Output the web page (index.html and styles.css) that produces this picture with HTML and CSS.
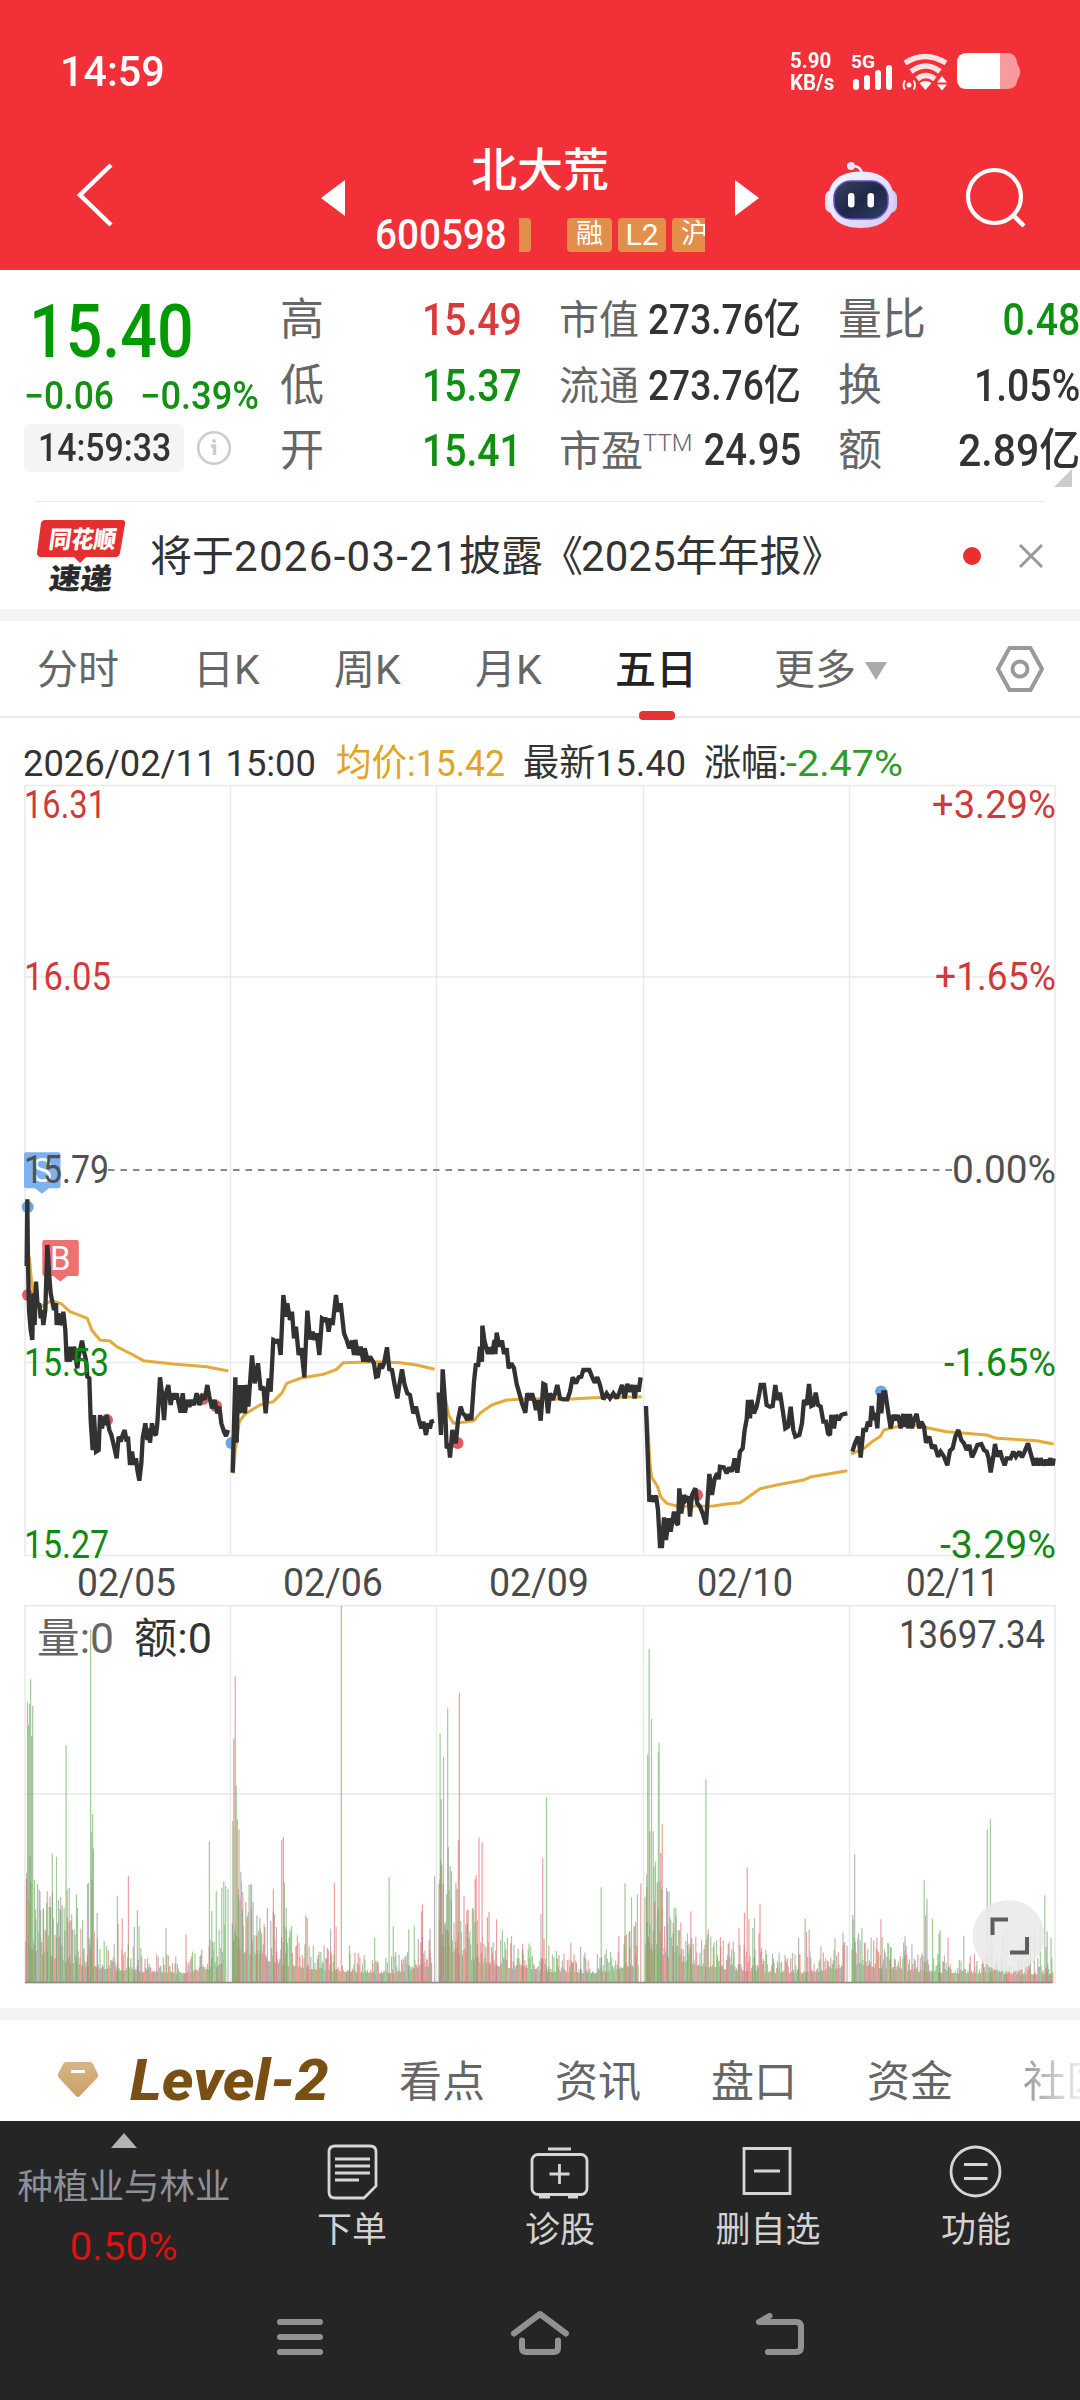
FILE: index.html
```html
<!DOCTYPE html>
<html lang="zh-CN">
<head>
<meta charset="utf-8">
<title>北大荒 600598</title>
<link rel="stylesheet" href="styles.css">
</head>
<body>
<header class="header">
  <div class="status">
    <span class="clock"><b class="fit">14:59</b></span>
    <span class="speed"><span>5.90</span><span>KB/s</span></span>
    <svg class="sys" width="172" height="42" viewBox="850 50 172 42">
      <text x="851" y="68" class="net" textLength="24" lengthAdjust="spacingAndGlyphs">5G</text>
      <path d="M856 82v5M867 78v9M878 73v14M889 68v19" stroke="#fff" stroke-width="6" stroke-linecap="round"/>
      <g fill="none" stroke="#ffe3e3" stroke-width="5.500"><path d="M905 63q20-13 41 0M911 71.500q15-11 29 0M917 79q9-7 18 0"/></g>
      <path d="M925.500 90l-6-7q6-4 12 0zM942 76l5 6.500h-10zM942 90.500l5-6h-10z" fill="#fff"/>
      <circle cx="909" cy="85" r="2.500" fill="#fff"/>
      <path d="M905 80.500q-3 5 0 9M913.500 80.500q3 5 0 9" fill="none" stroke="#fff" stroke-width="1.800"/>
      <path d="M967 53h40q9 0 10 9l.5 3q2.500 2 2.500 7t-2.500 7l-.5 3q-1 7-10 7h-40q-10 0-10-10V63q0-10 10-10z" fill="#f99a9c"/>
      <path d="M967 53h33v36h-33q-10 0-10-10V63q0-10 10-10z" fill="#fff"/>
    </svg>
  </div>
  <nav class="nav">
    <svg class="back" width="38" height="66" viewBox="0 0 38 66"><path d="M36 3L5 33l31 30" fill="none" stroke="#fff" stroke-width="4.500"/></svg>
    <svg class="prev" width="24" height="36" viewBox="0 0 24 36"><path d="M0 18L24 0v36z" fill="#fff"/></svg>
    <div class="stock">
      <h1 class="stock-name">北大荒</h1>
      <div class="stock-meta">
        <span class="code"><span class="fit">600598</span></span>
        <span class="sliver"></span>
        <span class="tag">融</span><span class="tag tag-l2">L2</span><span class="tag tag-cut">沪</span>
      </div>
    </div>
    <svg class="next" width="24" height="36" viewBox="0 0 24 36"><path d="M24 18L0 0v36z" fill="#fff"/></svg>
    <svg class="robot" width="72" height="68" viewBox="825 161 72 68">
      <defs><linearGradient id="shell" x1="0" y1="0" x2="1" y2="1"><stop offset="0" stop-color="#f4fbff"/><stop offset="1" stop-color="#d6c8f8"/></linearGradient>
      <linearGradient id="face" x1="0" y1="0" x2="1" y2="1"><stop offset="0" stop-color="#39445f"/><stop offset=".5" stop-color="#1e2748"/><stop offset="1" stop-color="#303e66"/></linearGradient></defs>
      <path d="M862 174q-1-8-9-8" fill="none" stroke="#f5e9f8" stroke-width="2.500"/><circle cx="851" cy="166" r="4" fill="#ece0f6"/>
      <rect x="825" y="190" width="14" height="23" rx="7" fill="#dfdcf7"/><rect x="883" y="190" width="14" height="23" rx="7" fill="#d4c8f5"/>
      <path d="M861 171.500c24 0 33 13 33 29s-11 27.500-33 27.500-33-11-33-27.500 9-29 33-29z" fill="url(#shell)"/>
      <rect x="834" y="181" width="54" height="38" rx="17" fill="url(#face)" stroke="#6b50c8" stroke-width="1.500"/>
      <rect x="848" y="193" width="6.500" height="14.500" rx="3.200" fill="#fff"/><rect x="867.500" y="193" width="6.500" height="14.500" rx="3.200" fill="#fff"/>
    </svg>
    <svg class="search" width="62" height="62" viewBox="964 166 62 62"><circle cx="994.500" cy="196.500" r="26.500" fill="none" stroke="#fff" stroke-width="4.200"/><path d="M1012 214l12 12" stroke="#fff" stroke-width="4.500"/></svg>
  </nav>
</header>

<section class="quote">
  <div class="last">
    <div class="last-price"><span class="fit">15.40</span></div>
    <div class="change"><span class="fit chg-abs">−0.06</span><span class="fit chg-pct">−0.39%</span></div>
    <div class="time-row">
      <span class="time"><span class="fit">14:59:33</span></span>
      <svg width="36" height="36" viewBox="0 0 36 36"><circle cx="18" cy="18" r="15.800" fill="none" stroke="#ccc" stroke-width="2.600"/><path d="M15 16h3.500v9" fill="none" stroke="#ccc" stroke-width="3.500"/><circle cx="18" cy="11" r="2" fill="#ccc"/></svg>
    </div>
  </div>
  <dl class="stats s1">
    <div><dt>高</dt><dd class="up"><span class="fit">15.49</span></dd></div>
    <div><dt>低</dt><dd class="down"><span class="fit">15.37</span></dd></div>
    <div><dt>开</dt><dd class="down"><span class="fit">15.41</span></dd></div>
  </dl>
  <dl class="stats s2">
    <div><dt>市值</dt><dd><span class="fit">273.76亿</span></dd></div>
    <div><dt>流通</dt><dd><span class="fit">273.76亿</span></dd></div>
    <div class="pe"><dt>市盈<small>TTM</small></dt><dd><span class="fit">24.95</span></dd></div>
  </dl>
  <dl class="stats s3">
    <div><dt>量比</dt><dd class="down"><span class="fit">0.48</span></dd></div>
    <div><dt>换</dt><dd><span class="fit">1.05%</span></dd></div>
    <div><dt>额</dt><dd><span class="fit amount">2.89亿</span></dd></div>
  </dl>
  <i class="corner"></i>
</section>

<section class="news">
  <svg class="news-badge" width="92" height="76" viewBox="35 517 92 76">
    <path d="M45 519h77q4 0 3 4l-5 29q-1 4-4 4H86l-6 6-6-6H41q-4 0-4-4l4-30q1-3 4-3z" fill="#e52e30"/>
    <g class="badge-text"><text transform="translate(48 547) skewX(-8)" fill="#fff" font-size="24" textLength="67" lengthAdjust="spacingAndGlyphs">同花顺</text>
    <text transform="translate(48 587.500) skewX(-8)" fill="#2b2b2b" font-size="29" textLength="63" lengthAdjust="spacingAndGlyphs">速递</text></g>
  </svg>
  <p class="news-text"><span>将于</span><span class="num">2026-03-21</span><span>披露</span><span class="bracket">《</span><span>2025</span><span>年年报》</span></p>
  <i class="dot"></i>
  <svg class="close" width="26" height="26" viewBox="0 0 26 26"><path d="M2 2l22 22M24 2L2 24" stroke="#999" stroke-width="3"/></svg>
</section>

<nav class="tabs">
  <span>分时</span><span>日K</span><span>周K</span><span>月K</span><span class="active">五日</span>
  <span class="more">更多<i></i></span>
  <svg width="50" height="48" viewBox="0 0 50 48"><path d="M14.500 3h21L47 24 35.500 45h-21L3 24z" fill="none" stroke="#999" stroke-width="4" stroke-linejoin="round"/><circle cx="25" cy="24" r="7.500" fill="none" stroke="#999" stroke-width="4"/></svg>
</nav>

<section class="charts">
<svg class="price" width="1080" height="887" viewBox="0 718 1080 887">
  <g fill="#333" class="cjk">
    <text x="23" y="776" textLength="293" lengthAdjust="spacingAndGlyphs">2026/02/11 15:00</text>
    <text x="336" y="776" textLength="169" lengthAdjust="spacingAndGlyphs" fill="#e3a324">均价:15.42</text>
    <text x="523" y="776" textLength="163" lengthAdjust="spacingAndGlyphs">最新15.40</text>
    <text x="704" y="776" textLength="83" lengthAdjust="spacingAndGlyphs">涨幅:</text>
    <text x="786" y="776" textLength="117" lengthAdjust="spacingAndGlyphs" fill="#309a2c">-2.47%</text>
  </g>
  <g fill="none" stroke="#e9e9e9" stroke-width="1.500">
    <path d="M25 785.500H1055V1555.500H25z M25 977H1055M25 1362.500H1055"/>
    <path d="M230.500 785V1555M436.500 785V1555M643.500 785V1555M849.500 785V1555"/>
  </g>
  <path d="M108 1170H952" stroke="#888" stroke-width="1.800" stroke-dasharray="6.500 6"/>

  <g transform="translate(24 1152.300)"><path d="M2 0h32.500q2 0 2 2v32q0 2-2 2H25l-7 5.500-7-5.500H2q-2 0-2-2V2q0-2 2-2z" fill="#7fb0f0"/><text x="18" y="30" class="mark">S</text></g>
  <g transform="translate(42.300 1240)"><path d="M2 0h32.500q2 0 2 2v32q0 2-2 2H25l-7 5.500-7-5.500H2q-2 0-2-2V2q0-2 2-2z" fill="#f07072"/><text x="18" y="30" class="mark">B</text></g>

  <g fill="#e05a5f"><circle cx="28" cy="1295" r="6"/><circle cx="107" cy="1420" r="6"/><circle cx="203" cy="1399" r="6"/><circle cx="216" cy="1406" r="6"/><circle cx="457.500" cy="1443" r="6"/><circle cx="697" cy="1495" r="6"/></g>
  <g fill="#6ca3e6"><circle cx="27.700" cy="1207" r="6"/><circle cx="231.500" cy="1443" r="6"/><circle cx="881" cy="1391.500" r="6"/></g>

  <g class="avg">
    <g transform="translate(0 1130) scale(.33333)">
      <polyline points="88,380 95,460 105,510 125,530 140,520 155,512 185,522 210,545 262,565 275,600 300,630 330,633 350,650 400,675 430,692 520,702 620,710 685,723"/>
      <polyline points="700,1030 706,960 718,875 735,852 780,825 820,815 845,790 860,760 900,745 970,733 1010,718 1030,698 1130,695 1200,698 1250,705 1304,718"/>
    </g>
    <g transform="translate(420 1230) scale(.33333)">
      <polyline points="76,505 86,555 100,580 130,577 162,572 180,550 215,525 260,510 320,506 440,508 520,503 665,500"/>
      <polyline points="682,560 690,700 695,742 712,768 722,800 740,820 775,829 880,828 920,822 960,818 980,805 1020,776 1070,765 1150,750 1175,740 1220,733 1282,722"/>
    </g>
    <g transform="translate(740 1230) scale(.33333)">
      <polyline points="333,672 350,665 372,655 400,632 420,620 432,600 470,590 520,585 545,590 620,605 740,615 770,625 890,632 941,642"/>
    </g>
  </g>
  <g class="line">
    <g transform="translate(0 1130) scale(.33333)">
      <polyline points="80,408 82,208 84,408 87,540 92,600 97,630 100,490 104,585 108,455 113,530 118,520 122,565 126,540 130,585 136,540 142,345 148,440 152,490 158,520 162,540 168,520 170,585 175,550 180,585 188,560 190,545 196,600 200,695 205,650 210,695 214,650 218,690 222,650 228,690 232,715 236,680 246,632 252,665 258,690 262,740 268,745 272,870 278,960 282,855 288,965 296,960 300,855 306,895 312,860 316,885 320,855 328,900 334,915 340,940 350,985 356,920 362,935 368,915 374,900 380,935 384,920 390,1005 396,965 402,1005 408,985 412,1020 418,1052 424,1000 428,925 436,880 442,930 446,895 450,938 456,880 462,910 468,915 472,880 480,742 486,790 492,870 498,790 505,765 512,825 518,790 524,808 530,790 536,820 542,848 548,790 555,848 562,810 568,830 575,810 582,825 590,790 598,825 606,800 614,808 622,765 628,800 636,835 644,810 652,850 658,830 664,880 672,905 678,918 684,900"/>
      <polyline points="698,1028 706,742 710,938 714,765 718,850 722,765 726,848 730,765 735,850 740,765 745,830 756,676 764,760 774,700 782,780 790,770 797,850 806,745 812,785 820,630 830,635 836,630 842,675 850,495 858,560 862,520 870,570 876,545 882,625 888,590 896,675 904,655 913,742 922,542 930,628 938,605 944,630 950,610 958,675 966,565 974,570 980,565 986,605 992,565 998,585 1008,495 1014,545 1022,520 1032,610 1040,630 1048,655 1056,632 1062,675 1066,630 1074,675 1082,650 1090,695 1094,655 1104,695 1110,680 1122,700 1128,740 1134,738 1140,700 1146,715 1152,700 1161,652 1168,718 1176,720 1184,765 1192,805 1198,765 1206,718 1214,765 1222,790 1230,795 1240,850 1248,830 1258,875 1264,895 1270,875 1278,915 1284,880 1290,895 1294,875 1302,872"/>
    </g>
    <g transform="translate(420 1230) scale(.33333)">
      <polyline points="56,487 63,615 68,418 74,500 80,655 86,640 90,683 97,600 104,635 108,635 114,570 122,530 128,550 134,555 142,570 148,553 154,570 162,455 168,400 174,410 180,350 186,395 187,287 193,330 198,350 204,372 210,352 216,372 224,330 226,372 230,308 238,350 246,332 252,372 260,355 266,415 274,400 282,415 290,462 298,490 306,520 316,548 322,490 330,510 336,490 342,510 348,540 354,510 362,572 370,462 376,465 384,550 390,490 398,510 406,488 412,465 420,505 430,508 442,508 450,485 458,442 468,460 476,442 484,440 490,420 508,420 516,440 524,458 532,442 540,465 550,508 560,490 570,505 580,490 590,505 598,488 606,465 614,505 622,462 630,485 638,465 644,505 650,465 656,485 662,442"/>
      <polyline points="678,528 682,640 688,815 694,797 700,815 708,797 714,840 720,948 726,948 732,862 738,930 746,865 752,905 762,845 770,880 774,885 778,775 784,850 792,795 798,810 806,800 810,860 816,795 826,775 832,820 840,830 848,850 858,883 868,732 876,795 884,745 892,730 896,748 900,710 912,712 920,730 928,712 936,725 944,685 952,728 960,665 968,655 974,600 980,568 984,510 990,565 994,510 1002,550 1010,530 1018,490 1022,465 1032,465 1040,525 1050,530 1058,528 1066,465 1072,510 1080,488 1088,540 1096,595 1104,590 1112,530 1120,600 1126,620 1138,615 1146,580 1152,510 1160,525 1167,462 1174,528 1180,525 1187,488 1194,525 1202,530 1210,575 1218,575 1224,610 1230,615 1234,555 1242,595 1248,555 1256,570 1264,555 1272,552 1282,550"/>
    </g>
    <g transform="translate(740 1230) scale(.33333)">
      <polyline points="337,665 345,640 354,620 358,640 362,683 370,600 378,600 384,575 390,590 395,528 402,570 406,548 412,595 418,490 424,550 430,487 436,487 442,530 452,595 460,555 468,570 474,555 482,595 490,552 496,590 500,552 504,595 510,552 516,595 522,570 530,552 538,595 544,575 552,590 558,638 568,620 576,655 584,645 594,680 602,665 612,680 622,706 630,662 638,655 646,620 655,600 664,630 672,640 680,660 688,645 696,682 704,665 712,645 724,642 732,660 740,665 746,685 752,727 760,680 765,642 772,680 780,662 786,685 794,706 800,685 812,685 820,665 828,680 838,665 846,682 854,665 864,640 872,670 882,706 888,685 896,706 902,685 910,706 918,690 924,706 930,685 938,706 941,685"/>
    </g>
  </g>

  <g class="axis">
    <g fill="#cf3a3a"><text x="24" y="818" textLength="82" lengthAdjust="spacingAndGlyphs">16.31</text><text x="24" y="990" textLength="87" lengthAdjust="spacingAndGlyphs">16.05</text>
    <text x="932" y="818" textLength="124" lengthAdjust="spacingAndGlyphs">+3.29%</text><text x="935" y="990" textLength="121" lengthAdjust="spacingAndGlyphs">+1.65%</text></g>
    <g fill="#505050"><text x="24" y="1182.500" textLength="85" lengthAdjust="spacingAndGlyphs">15.79</text><text x="952" y="1182.500" textLength="104" lengthAdjust="spacingAndGlyphs">0.00%</text></g>
    <g fill="#118a11"><text x="24" y="1375.500" textLength="85" lengthAdjust="spacingAndGlyphs">15.53</text><text x="24" y="1558" textLength="85" lengthAdjust="spacingAndGlyphs">15.27</text>
    <text x="944" y="1375.500" textLength="112" lengthAdjust="spacingAndGlyphs">-1.65%</text><text x="940" y="1558" textLength="116" lengthAdjust="spacingAndGlyphs">-3.29%</text></g>
    <g fill="#4a4a4a"><text x="77" y="1595.500" textLength="99" lengthAdjust="spacingAndGlyphs">02/05</text><text x="283" y="1595.500" textLength="100" lengthAdjust="spacingAndGlyphs">02/06</text><text x="489" y="1595.500" textLength="100" lengthAdjust="spacingAndGlyphs">02/09</text><text x="697" y="1595.500" textLength="96" lengthAdjust="spacingAndGlyphs">02/10</text><text x="906" y="1595.500" textLength="93" lengthAdjust="spacingAndGlyphs">02/11</text></g>
  </g>
</svg>
<svg class="volume" width="1080" height="403" viewBox="0 1605 1080 403">
  <g fill="none" stroke="#e9e9e9" stroke-width="1.500"><path d="M25 1605.800H1055V1983H25zM25 1794H1055M230.500 1605V1983M436.500 1605V1983M643.500 1605V1983M849.500 1605V1983"/></g>
  <text x="37" y="1653" textLength="77" lengthAdjust="spacingAndGlyphs" fill="#666" class="vol-text">量:0</text>
  <text x="134" y="1653" textLength="78" lengthAdjust="spacingAndGlyphs" fill="#333" class="vol-text">额:0</text>
  <g class="axis"><text x="899" y="1647.500" textLength="146" lengthAdjust="spacingAndGlyphs" fill="#4a4a4a">13697.34</text></g>
  <g id="bars"></g>
  <circle cx="1008.500" cy="1936" r="36" fill="#e9e9e9" fill-opacity=".88"/>
  <path d="M1008 1919.500H992.500V1935M1027 1937v15.500H1010" fill="none" stroke="#5d5d5d" stroke-width="4"/>
</svg>
</section>

<nav class="sections">
  <svg width="44" height="40" viewBox="0 0 44 40"><defs><linearGradient id="gold" x1="0" y1="0" x2="0" y2="1"><stop offset="0" stop-color="#d8b486"/><stop offset="1" stop-color="#cba267"/></linearGradient></defs><path d="M10 2h24q2 0 3 2l5 10q1 2-1 4L24 36q-2 2-4 0L3 18q-2-2-1-4L7 4q1-2 3-2z" fill="url(#gold)"/><path d="M15 11.500h14" stroke="#fff" stroke-width="3"/></svg>
  <span class="level2"><span class="fit">Level-2</span></span>
  <span>看点</span><span>资讯</span><span>盘口</span><span>资金</span><span class="fade">社区</span>
</nav>

<footer class="footer">
  <div class="toolbar">
    <div class="sector">
      <i class="tri-up"></i>
      <span class="sector-name">种植业与林业</span>
      <span class="sector-pct"><span class="fit">0.50%</span></span>
    </div>
    <div class="tool"><svg width="60" height="60" viewBox="322 2142 60 60"><path d="M335 2146h35q6 0 6 6v34l-12 12h-29q-6 0-6-6v-40q0-6 6-6z"/><path d="M335 2159h35M335 2166h35M335 2173h35M335 2180h24"/></svg><span>下单</span></div>
    <div class="tool"><svg width="60" height="60" viewBox="530 2142 60 60"><rect x="532" y="2154.500" width="55" height="40" rx="6"/><path d="M548 2149h23M559.500 2164v20M549.500 2174h20M539 2197h11M568 2197h10"/></svg><span>诊股</span></div>
    <div class="tool"><svg width="60" height="60" viewBox="738 2142 60 60"><path d="M744 2148.500h46v45h-46zM754 2171h26"/></svg><span>删自选</span></div>
    <div class="tool"><svg width="60" height="60" viewBox="945.500 2142 60 60"><circle cx="975" cy="2171.500" r="24.500"/><path d="M963.500 2164.500h23.500M963.500 2178.500h23.500"/></svg><span>功能</span></div>
  </div>
  <div class="sysnav">
    <svg width="48" height="48" viewBox="276 2313 48 48"><path d="M280 2322h40M280 2337h40M280 2352h40"/></svg>
    <svg width="62" height="48" viewBox="509 2308 62 48"><path d="M514 2333.500l26-19.500 26 19.500M522 2340.500v7.500q0 4 4 4h28q4 0 4-4v-7.500"/></svg>
    <svg width="52" height="48" viewBox="754 2311 52 48"><path d="M769.500 2316l-10.500 6h37q5 0 5 5v20q0 5-5 5h-28"/></svg>
  </div>
</footer>
<script src="volume.js"></script>
</body>
</html>
```
FILE: styles.css
```css
* { box-sizing: border-box; margin: 0; padding: 0; }
body { width: 1080px; height: 2400px; overflow: hidden; background: #fff; color: #333; font-family: Roboto, "Noto Sans CJK SC", sans-serif; }
svg { display: block; flex: none; }
.fit { display: inline-block; white-space: nowrap; transform-origin: 0 50%; }

.header { height: 270px; background: #f13038; color: #fff; }
.status { display: flex; align-items: flex-start; height: 142px; padding: 50px 58px 0 60px; }
.clock { width: 730px; font-size: 43px; line-height: 42px; }
.clock .fit { font-weight: 500; transform: scaleX(.96); }
.speed { display: flex; flex-direction: column; width: 60px; font-size: 22px; line-height: 22px; font-weight: 700; }
.speed span { transform: scaleX(.93); transform-origin: 0 50%; }
.net { font-size: 19px; font-weight: 700; fill: #fff; }
.nav { display: flex; height: 128px; padding-left: 75px; }
.back { margin-top: 20px; }
.prev { margin: 38px 0 0 208px; }
.next { margin: 38px 0 0 30px; }
.robot { margin: 19px 0 0 66px; }
.search { margin: 24px 0 0 67px; }
.stock { width: 328px; margin-left: 32px; overflow: hidden; }
.stock-name { font-size: 46px; line-height: 57px; font-weight: 500; text-align: center; text-indent: -2px; }
.stock-meta { display: flex; align-items: center; height: 72px; }
.stock-meta > * { flex: none; }
.code { width: 142px; font-size: 42px; font-weight: 500; line-height: 50px; }
.code .fit { transform: translateX(-2px) scaleX(.92); }
.sliver { width: 12px; height: 34px; margin-right: 36px; border-radius: 0 4px 4px 0; background: #e38e4a; }
.tag { width: 45px; height: 34px; margin-right: 6px; border-radius: 4px; background: #e38e4a; font-size: 27px; line-height: 33px; text-align: center; }
.tag-l2 { width: 48px; font-size: 30px; }
.tag-cut { width: 45px; margin: 0; }

.quote { display: flex; position: relative; height: 231px; padding-top: 17px; }
.last { width: 280px; padding-left: 24px; }
.last-price { height: 86px; padding: 7px 0 0 5px; font-size: 75px; line-height: 75px; font-weight: 500; color: #090; }
.last-price .fit { transform: scaleX(.86); }
.change { display: flex; height: 44px; padding-top: 1px; font-size: 38px; line-height: 44px; font-weight: 500; color: #149014; }
.chg-abs { width: 116px; transform: scaleX(.93); }
.chg-pct { transform: scaleX(.955); }
.time-row { display: flex; align-items: center; gap: 12px; margin-top: 7px; }
.time { width: 160px; height: 48px; padding-left: 14px; border-radius: 7px; background: #f4f4f4; font-size: 38px; line-height: 48px; font-weight: 500; }
.time .fit { transform: scaleX(.89); }
.stats { display: flex; flex-direction: column; }
.stats > div { display: flex; justify-content: space-between; height: 65.500px; line-height: 65.500px; }
.stats dt { padding-top: 1px; color: #666; font-size: 44px; white-space: nowrap; }
.stats dd { font-size: 45px; font-weight: 500; white-space: nowrap; }
.stats .fit { transform-origin: 100% 50%; transform: scaleX(.87); }
.s1 { width: 242px; margin-right: 37px; }
.s2 { width: 242px; margin-right: 37px; }
.s3 { width: 242px; }
.s2 dt { font-size: 40px; }
.s2 dd { display: flex; justify-content: flex-end; font-size: 42px; width: 150px; }
.s2 .fit { transform: scaleX(.885); }
.s2 .pe dt { font-size: 42px; width: 140px; }
.s2 .pe dd { font-size: 44px; width: 100px; }
.s2 .pe .fit { transform: scaleX(.87); }
.s2 small { position: relative; top: -15px; font-size: 24px; font-weight: 300; }
.stats .amount { transform: scaleX(.91); }
.up { color: #d93a3a; }
.down { color: #109010; }
.corner { position: absolute; right: 8px; top: 199px; border: 9px solid; border-color: transparent #ccc #ccc transparent; }

.news { display: flex; align-items: center; height: 108px; margin: 0 36px; border-top: 1px solid #eaeaea; }
.news-badge { margin-left: -1px; }
.badge-text { font-family: "Noto Sans CJK SC", sans-serif; font-weight: 900; }
.news-text { display: flex; width: 838px; padding: 3px 0 0 23px; font-size: 42px; line-height: 60px; white-space: nowrap; }
.num { letter-spacing: 1.3px; }
.bracket { width: 40px; margin-left: -2px; }
.dot { flex: none; width: 18px; height: 18px; margin-right: 37px; border-radius: 50%; background: #e93030; }

.tabs { display: grid; grid-template-columns: 157px 140px 141px 140px 159px 221px 50px; height: 109px; padding-left: 37px; border-top: 12px solid #f4f4f4; border-bottom: 2px solid #e8e8e8; font-size: 41px; line-height: 99px; color: #666; }
.tabs > svg { margin-top: 24px; }
.tabs > span:nth-child(2) { margin-left: -1px; }
.active { color: #222; font-weight: 500; position: relative; }
.active::after { content: ""; position: absolute; left: 24px; bottom: 0; width: 36px; height: 9px; border-radius: 4px; background: #e63232; }
.more { display: flex; align-items: center; gap: 9px; }
.more i { border: 11px solid transparent; border-top: 18px solid #aaa; border-bottom: 0; }

.cjk { font-size: 37px; }
.axis { font-size: 38px; }
.vol-text { font-size: 42px; }
.mark { font-size: 33px; fill: #fff; text-anchor: middle; }
.line { fill: none; stroke: #323232; stroke-width: 13; stroke-linejoin: miter; stroke-miterlimit: 2; }
.avg { fill: none; stroke: #e5aa3c; stroke-width: 9; stroke-linejoin: round; }

.sections { display: grid; grid-template-columns: 76px 267px 156px 156px 156px 156px 57px; height: 113px; padding-left: 56px; border-top: 12px solid #f4f4f4; font-size: 43px; line-height: 124px; color: #666; overflow: hidden; white-space: nowrap; }
.sections > svg { margin-top: 40px; }
.level2 { font-size: 57px; line-height: 122px; font-weight: 800; font-style: italic; color: #7a4f14; }
.level2 .fit { transform: translateX(-2px) scaleX(1.06); }
.fade { background: linear-gradient(90deg, #999, #eee); -webkit-background-clip: text; background-clip: text; color: transparent; overflow: hidden; }

.footer { height: 279px; background: #252525; color: #d2d2d2; }
.toolbar { display: flex; height: 172px; }
.sector { display: flex; flex-direction: column; align-items: center; width: 248px; padding-top: 12px; }
.tri-up { border: 13.500px solid transparent; border-bottom: 15px solid #b3b3b3; border-top: 0; }
.sector-name { margin-top: 12px; font-size: 35.500px; line-height: 54px; color: #8f8f99; }
.sector-pct { font-size: 38px; line-height: 44px; margin-top: 11px; color: #e01212; }
.sector-pct .fit { transform: scaleX(1.06); transform-origin: 50% 50%; }
.tool { display: flex; flex-direction: column; align-items: center; width: 208px; padding-top: 21px; font-size: 35px; line-height: 57px; }
.tool svg { fill: none; stroke: #d6d6d6; stroke-width: 2.800; }
.sysnav { display: flex; padding: 20px 0 0 276px; }
.sysnav svg { fill: none; stroke: #929292; stroke-width: 6; stroke-linecap: round; stroke-linejoin: round; }
.sysnav svg + svg { margin-left: 185px; margin-top: -5px; }
.sysnav svg + svg + svg { margin-left: 183px; margin-top: -2px; }
```
FILE: volume.js
```js
// Intraday volume bars. Session bounds and spikes share one scale:
// x is divided by SX, heights are measured up from BASE and divided by 3.
const SX = 2.904, BASE = 1268, BOTTOM = 1983;
const TONES = { r: "#e06464", g: "#64ac58", k: "#8c8c90" };

const sessions = [[75, 657, 1], [675, 1255, 1], [1275, 1855, 1], [1873, 2452, 0.8], [2474, 3058, 0]];

const spikes = `77,957,r 80,424,r 83,495,g 86,430,g 89,357,g 92,528,r 95,436,g 100,958,g 103,1047,k 117,1050,g 126,1048,k 137,993,r 152,879,g 164,889,g 147,1040,g 170,1020,k 176,1010,k 181,1035,k 192,555,g 195,988,r 201,982,g 206,1080,r 222,1002,g 225,1042,r 235,1105,r 240,1080,g 254,972,k 257,968,k 263,208,g 265,815,g 267,957,r 269,762,g 271,865,r 282,1058,k 341,1006,g 343,1090,r 355,1073,r 373,947,r 390,1100,k 399,1050,k 404,1098,g 482,1102,k 540,1122,r 608,843,g 615,1052,k 628,993,g 644,982,g 650,963,g 655,976,g 662,985,k
676,782,g 679,535,r 683,348,r 686,675,g 689,777,g 692,985,r 694,807,r 697,1020,k 701,966,k 705,995,r 715,1075,r 730,1042,r 735,1024,g 746,1065,k 756,1105,g 794,985,r 797,1062,r 803,1100,k 818,838,r 823,831,r 826,967,g 831,1042,k 888,1065,r 892,1073,r 960,1105,k 971,967,r 976,1100,r 991,137,r 1015,1155,k 1088,1132,g 1130,951,g 1142,1098,g 1187,1107,g 1203,1096,g 1224,1053,k 1227,1032,r 1249,1105,k 1262,948,k
1276,1078,r 1278,520,g 1281,717,g 1283,914,r 1288,590,g 1293,1085,g 1300,444,g 1302,860,k 1305,990,g 1307,918,g 1311,933,r 1324,967,g 1327,985,r 1331,840,r 1334,398,r 1356,1050,r 1375,1047,r 1380,955,r 1383,945,r 1386,1080,g 1391,832,r 1400,846,r 1420,1055,r 1442,1077,r 1518,1150,r 1571,1060,k 1576,894,r 1580,1135,r 1587,711,g 1594,1155,k 1658,1147,r 1686,1160,k 1746,981,g 1761,1167,k 1797,1128,r 1815,969,g 1819,1122,r 1829,1112,k 1834,1011,g 1846,1085,r 1851,1002,g 1861,969,r
1878,943,g 1881,582,g 1885,266,g 1887,813,r 1892,475,g 1897,813,g 1901,1025,r 1904,903,g 1909,966,r 1912,575,g 1914,547,g 1916,963,g 1919,878,r 1921,1038,g 1923,792,r 1930,1098,r 1938,1095,k 1955,1088,r 1963,1068,k 1973,1110,r 1997,1155,g 2006,1053,r 2050,657,g 2092,1130,r 2146,1102,r 2162,1057,r 2170,921,r 2175,1077,r 2186,1102,g 2191,1074,k 2204,1118,r 2207,1032,r 2319,1133,k 2338,1075,g 2342,1116,r 2350,1108,k 2384,1158,k 2448,1117,k 2453,1145,r 2460,1155,k
2477,1078,k 2482,882,k 2498,1140,g 2558,1077,r 2562,1130,g 2586,1160,g 2628,1128,k 2684,960,g 2688,1065,k 2692,1015,k 2708,1075,g 2727,1120,g 2730,1110,g 2753,1132,r 2799,1126,k 2867,807,g 2876,777,g 2881,1140,r 2913,1125,g 2923,1102,k 2968,1145,r 2992,1125,g 3004,1110,k 3021,1087,g 3034,1005,g 3038,1160,k 3041,1113,k 3052,1132,g`
  .split(/\s+/).map(s => s.split(",")).map(([x, y, t]) => [+x, BASE - y, t]);

let seed = 20260211;
const rnd = () => (seed = (seed * 1103515245 + 12345) % 2147483648) / 2147483648;

const paths = { r: "", g: "", k: "" };
const bar = (x, h, tone) => { paths[tone] += `M${(x / SX).toFixed(1)} ${BOTTOM}v${(-h / 3).toFixed(1)}`; };

// Each session opens busy, thins out towards the middle and may pick up at the close.
for (const [from, to, close] of sessions) {
  for (let x = from; x <= to; x += 2.42) {
    const p = (x - from) / (to - from);
    const open = close ? 170 : 70;
    const level = 34 + open * Math.exp(-p * 4.2) + 260 * close * Math.max(0, p - 0.8);
    const t = rnd();
    const tone = t < 0.38 ? "r" : t < 0.74 ? "g" : "k";
    bar(x, level * (0.5 + 1.5 * Math.pow(rnd(), 2.4)) + 8, tone);
  }
}
spikes.forEach(s => bar(...s));

document.getElementById("bars").innerHTML = ["k", "r", "g"]
  .map(t => `<path d="${paths[t]}" stroke="${TONES[t]}" stroke-opacity=".62" stroke-width="1.200"/>`).join("")
  + '<path d="M25 1982.500H1052" stroke="#8f857c" stroke-width="1.500"/>';
```
